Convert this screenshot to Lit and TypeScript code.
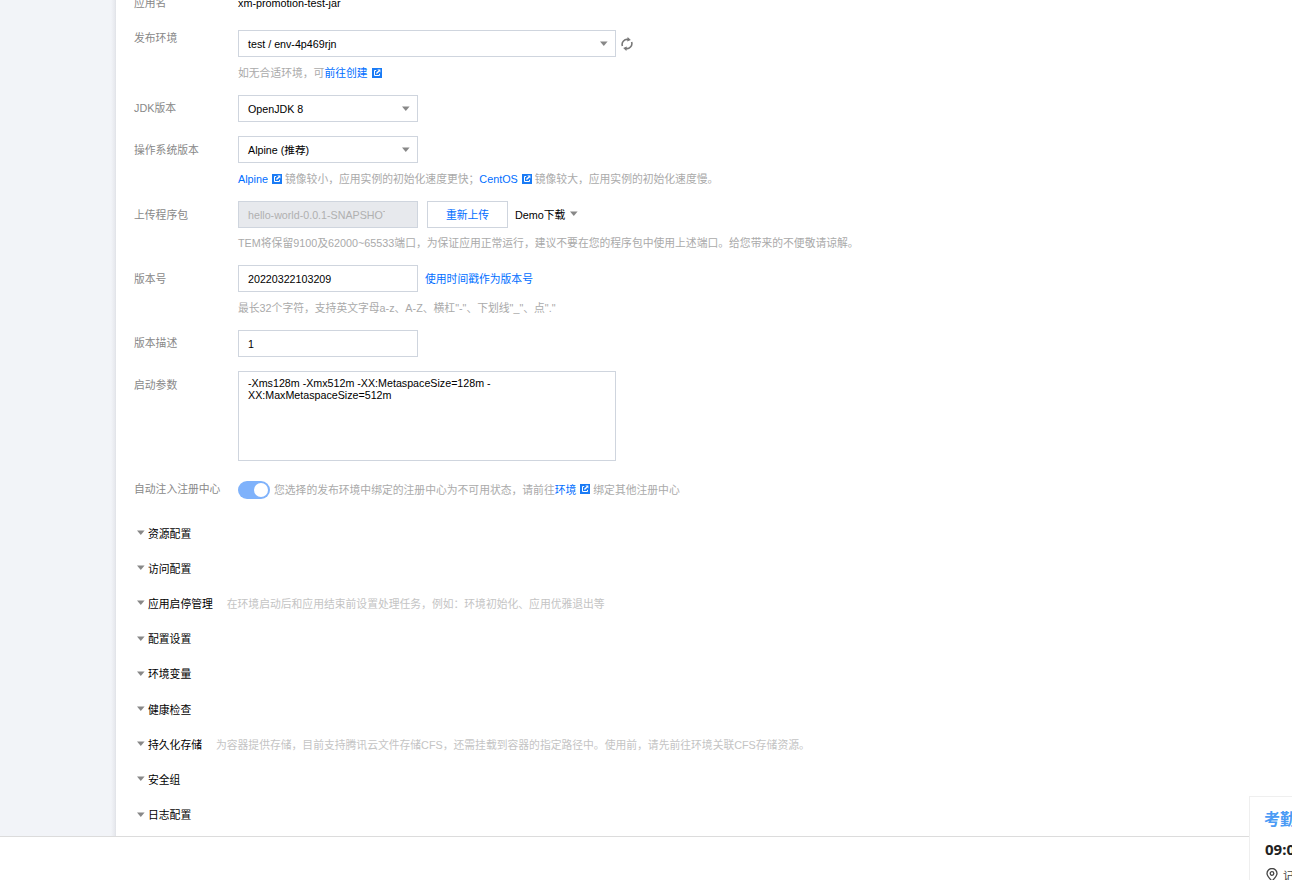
import { LitElement, html, css, svg } from "lit";
import { customElement } from "lit/decorators.js";

const ext = html`<svg class="ext" viewBox="0 0 10 10" width="10" height="10"><path d="M0 0H10V10H0Z" fill="#1a7bf5"/><path d="M4.2 2.5H2.5V7.5H7.5V5.8" fill="none" stroke="#fff" stroke-width="1"/><path d="M4.4 5.6L7 3" stroke="#fff" stroke-width="1.4"/><path d="M5.4 1.6H8.4V4.6Z" fill="#fff"/></svg>`;
const caret = svg`<path d="M0 .6H7.6L3.8 5Z" fill="#888"/>`;
const arrow = html`<svg class="arrow" viewBox="0 0 8 5" width="8" height="5">${caret}</svg>`;

@customElement("app-root")
export class AppRoot extends LitElement {
  static styles = css`
    :host { display: block; height: 880px; overflow: hidden; position: relative; background: #fff;
      font-family: "Liberation Sans", "Noto Sans CJK SC", sans-serif; font-size: 10.8px; color: #000; }
    .top { display: flex; height: 836px; border-bottom: 1px solid #dcdcdc; box-sizing: content-box; overflow: hidden; }
    .side { width: 116px; flex: none; background: linear-gradient(90deg, #f2f4f8 0, #f2f4f8 111px, #e6e8ed 115px, #dfe1e6 116px); }
    .form { flex: 1; padding-left: 18px; margin-top: -5px; }
    .row { display: flex; align-items: center; height: 27px; }
    .label { width: 104px; flex: none; color: #888; }
    .up1 { margin-bottom: 2px; }
    .up2 { margin-bottom: 4px; }
    .up7 { margin-bottom: 14px; }
    .box { box-sizing: border-box; height: 27px; border: 1px solid #cfd5de; background: #fff; display: flex; align-items: center; padding: 0 7px 0 9px; justify-content: space-between; font-size: 10.7px; }
    .w378 { width: 378px; }
    .w180 { width: 180px; }
    .arrow { flex: none; }
    .help { color: #aaa; margin-left: 104px; height: 12px; line-height: 12px; display: flex; align-items: center; margin-top: 10px; }
    .help-tight { margin-top: 9px; }
    .link { color: #006eff; }
    .ext { margin: 0 3px 0 4px; flex: none; }
    .refresh { margin-left: 5px; flex: none; }
    .disabled { background: #e7e9ed; color: #b0b0b0; white-space: nowrap; padding-right: 0; }
    .disabled span { display: block; width: 137px; overflow: hidden; }
    .btn { box-sizing: border-box; width: 81px; height: 27px; margin-left: 9px; border: 1px solid #cfd5de; color: #006eff; display: flex; align-items: center; justify-content: center; padding-bottom: 2px; }
    .demo { margin-left: 7px; display: flex; align-items: center; gap: 5px; margin-bottom: 2px; }
    .stamp { margin-left: 7px; margin-bottom: 2px; }
    .area { box-sizing: border-box; width: 378px; height: 90px; border: 1px solid #cfd5de; padding: 5px 9px; line-height: 12px; font-size: 10.7px; }
    .top-align { align-items: flex-start; height: 90px; }
    .top-align .label { padding-top: 5px; }
    .switch { width: 32px; height: 18px; border-radius: 9px; background: #7fb2fb; position: relative; flex: none; }
    .switch::after { content: ""; position: absolute; right: 2px; top: 2px; width: 14px; height: 14px; border-radius: 50%; background: #fff; }
    .switch-text { color: #aaa; margin-left: 4px; display: flex; align-items: center; margin-bottom: 2px; }
    .sect { display: flex; align-items: center; height: 35.2px; }
    .sect .arrow { margin: 0 3px 0 3px; }
    .sect .note { color: #c4c4c4; margin-left: 14px; }
    .gap14 { margin-top: 14px; }
    .gap16 { margin-top: 16px; }
    .name-row { height: 16px; }
    .env-row { margin-top: 19px; }
    .switch-row { margin-top: 20px; height: 18px; }
    .sects { margin-top: 16px; }
    .card { position: absolute; left: 1249px; top: 796px; width: 120px; height: 100px; background: #fff; border: 1px solid #efefef; box-sizing: border-box; padding: 13px 14px; }
    .card-title { color: #4a9bf5; font-size: 16px; font-weight: bold; line-height: 20px; white-space: nowrap; }
    .card-time { font-family: "Noto Sans", sans-serif; font-size: 15px; font-weight: bold; color: #222; margin: 9px 0 0 1px; line-height: 20px; }
    .card-loc { display: flex; align-items: center; gap: 5px; margin: 8px 0 0 2px; color: #444; font-size: 11px; }
  `;

  render() {
    const sects: [string, string?][] = [
      ["资源配置"], ["访问配置"],
      ["应用启停管理", "在环境启动后和应用结束前设置处理任务，例如：环境初始化、应用优雅退出等"],
      ["配置设置"], ["环境变量"], ["健康检查"],
      ["持久化存储", "为容器提供存储，目前支持腾讯云文件存储CFS，还需挂载到容器的指定路径中。使用前，请先前往环境关联CFS存储资源。"],
      ["安全组"], ["日志配置"],
    ];
    return html`
      <div class="top">
        <div class="side"></div>
        <div class="form">
          <div class="row name-row"><div class="label up1">应用名</div><div>xm-promotion-test-jar</div></div>
          <div class="row env-row">
            <div class="label up7">发布环境</div>
            <div class="box w378"><span>test / env-4p469rjn</span>${arrow}</div>
            <svg class="refresh" viewBox="0 0 12 14" width="12" height="14" fill="none" stroke="#777" stroke-width="1.6"><path d="M1.4 9A5 5 0 0 1 7.5 2.6"/><path d="M10.6 5A5 5 0 0 1 4.5 11.4"/><path d="M6.6 0L9.8 2.9L6.2 4.6Z" fill="#777" stroke="none"/><path d="M5.4 14L2.2 11.1L5.8 9.4Z" fill="#777" stroke="none"/></svg>
          </div>
          <div class="help">如无合适环境，可<span class="link">前往创建</span>${ext}</div>
          <div class="row gap16"><div class="label up2">JDK版本</div><div class="box w180"><span>OpenJDK 8</span>${arrow}</div></div>
          <div class="row gap14"><div class="label up1">操作系统版本</div><div class="box w180"><span>Alpine (推荐)</span>${arrow}</div></div>
          <div class="help"><span class="link">Alpine</span>${ext}<span>镜像较小，应用实例的初始化速度更快；</span><span class="link">CentOS</span>${ext}<span>镜像较大，应用实例的初始化速度慢。</span></div>
          <div class="row gap16">
            <div class="label up1">上传程序包</div>
            <div class="box w180 disabled"><span>hello-world-0.0.1-SNAPSHOT.jar</span></div>
            <div class="btn">重新上传</div>
            <div class="demo">Demo下载 ${arrow}</div>
          </div>
          <div class="help help-tight">TEM将保留9100及62000~65533端口，为保证应用正常运行，建议不要在您的程序包中使用上述端口。给您带来的不便敬请谅解。</div>
          <div class="row gap16"><div class="label up1">版本号</div><div class="box w180">20220322103209</div><span class="link stamp">使用时间戳作为版本号</span></div>
          <div class="help">最长32个字符，支持英文字母a-z、A-Z、横杠"-"、下划线"_"、点"."</div>
          <div class="row gap16"><div class="label up2">版本描述</div><div class="box w180">1</div></div>
          <div class="row gap14 top-align"><div class="label">启动参数</div><div class="area">-Xms128m -Xmx512m -XX:MetaspaceSize=128m -XX:MaxMetaspaceSize=512m</div></div>
          <div class="row switch-row">
            <div class="label up2">自动注入注册中心</div>
            <div class="switch"></div>
            <div class="switch-text">您选择的发布环境中绑定的注册中心为不可用状态，请前往<span class="link">环境</span>${ext}<span>绑定其他注册中心</span></div>
          </div>
          <div class="sects">
            ${sects.map(([t, n]) => html`<div class="sect">${arrow}<span>${t}</span>${n ? html`<span class="note">${n}</span>` : ""}</div>`)}
          </div>
        </div>
      </div>
      <div class="card">
        <div class="card-title">考勤打卡</div>
        <div class="card-time">09:00</div>
        <div class="card-loc">
          <svg viewBox="0 0 12 14" width="12" height="14" fill="none" stroke="#444" stroke-width="1.3"><path d="M6 13C3 10 1 8 1 5.5A5 5 0 0 1 11 5.5C11 8 9 10 6 13Z"/><circle cx="6" cy="5.5" r="1.8"/></svg>
          <span>记录</span>
        </div>
      </div>
    `;
  }
}
